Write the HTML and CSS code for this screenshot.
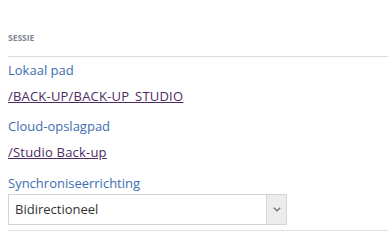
FILE: index.html
```html
<!DOCTYPE html>
<html lang="nl">
<head>
<meta charset="utf-8">
<title>Sessie</title>
<link rel="stylesheet" href="styles.css">
</head>
<body>
<div class="panel">
  <div class="section-title">SESSIE</div>
  <div class="fields">
    <div class="field">
      <div class="label">Lokaal pad</div>
      <a class="value" href="#">/BACK-UP/BACK-UP_STUDIO</a>
    </div>
    <div class="field">
      <div class="label">Cloud-opslagpad</div>
      <a class="value" href="#">/Studio Back-up</a>
    </div>
    <div class="field field-select">
      <div class="label">Synchroniseerrichting</div>
      <div class="select">
        <span class="select-text">Bidirectioneel</span>
        <span class="select-btn">
          <svg width="8" height="5" viewBox="0 0 8 5"><path d="M0.8 0.8 L4 3.8 L7.2 0.8" fill="none" stroke="#777" stroke-width="1.5"/></svg>
        </span>
      </div>
    </div>
  </div>
</div>
</body>
</html>
```

FILE: styles.css
```css
html, body {
  margin: 0;
  padding: 0;
  background: #fff;
}
body {
  font-family: "Open Sans", "Noto Sans", sans-serif;
}
.panel {
  padding-left: 8px;
}
.section-title {
  padding-top: 32px;
  height: 24px;
  line-height: 12px;
  font-size: 8.5px;
  font-weight: bold;
  color: #7d8896;
  border-bottom: 1px solid #dcdcdc;
}
.fields {
  display: flex;
  flex-direction: column;
  padding-top: 4px;
  border-bottom: 1px solid #e0e0e0;
  padding-bottom: 5px;
}
.field {
  display: flex;
  flex-direction: column;
  align-items: flex-start;
  margin-bottom: 12px;
}
.field-select {
  margin-bottom: 0;
}
.label {
  font-size: 13px;
  line-height: 18px;
  color: #3d6db0;
}
.value {
  margin-top: 8px;
  font-size: 13px;
  line-height: 18px;
  color: #4b2b63;
  text-decoration: underline;
  letter-spacing: 0.2px;
}
.field-select .label {
  margin-top: 1px;
}
.select {
  margin-top: 2px;
  display: flex;
  width: 279px;
  height: 31px;
  box-sizing: border-box;
  border: 1px solid #d4d4d4;
}
.select-text {
  flex: 1;
  padding-left: 6px;
  font-size: 13px;
  line-height: 29px;
  color: #333;
}
.select-btn {
  width: 19px;
  background: #ececec;
  border-left: 1px solid #d4d4d4;
  display: flex;
  align-items: center;
  justify-content: center;
}
```
